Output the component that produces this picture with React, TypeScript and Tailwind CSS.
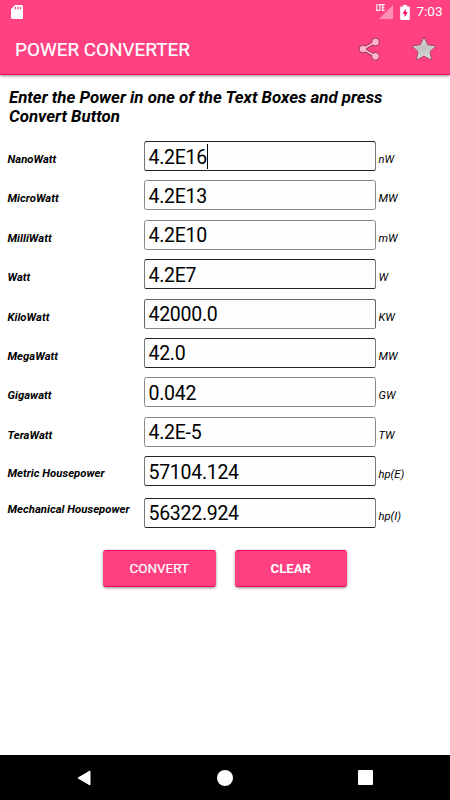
import React from "react";

type Row = { label: string; value: string; unit: string; row: string; labelPad: string; border: string; focused?: boolean };

const std = "h-[39.4px]";
const dark = "border-[#222] border-x-[#777]";
const light = "border-[#888]";

const rows: Row[] = [
  { label: "NanoWatt", value: "4.2E16", unit: "nW", row: std, labelPad: "pt-[12px]", border: dark, focused: true },
  { label: "MicroWatt", value: "4.2E13", unit: "MW", row: std, labelPad: "pt-[12px]", border: light },
  { label: "MilliWatt", value: "4.2E10", unit: "mW", row: std, labelPad: "pt-[12px]", border: light },
  { label: "Watt", value: "4.2E7", unit: "W", row: std, labelPad: "pt-[12px]", border: dark },
  { label: "KiloWatt", value: "42000.0", unit: "KW", row: std, labelPad: "pt-[12px]", border: "border-[#666] border-b-[#888]" },
  { label: "MegaWatt", value: "42.0", unit: "MW", row: std, labelPad: "pt-[12px]", border: dark },
  { label: "Gigawatt", value: "0.042", unit: "GW", row: std, labelPad: "pt-[12px]", border: light },
  { label: "TeraWatt", value: "4.2E-5", unit: "TW", row: std, labelPad: "pt-[12px]", border: light },
  { label: "Metric Housepower", value: "57104.124", unit: "hp(E)", row: "h-[41.8px]", labelPad: "pt-[11px]", border: dark },
  { label: "Mechanical Housepower", value: "56322.924", unit: "hp(I)", row: "h-[30px]", labelPad: "pt-[5px]", border: dark },
];

function StatusBar() {
  return (
    <div className="flex h-6 items-center pl-[11px] pr-[7.500px]">
      <svg width="12" height="14" viewBox="0 0 12 14" className="mt-[-1px]">
        <path d="M4 0h6.5Q12 0 12 1.5v11Q12 14 10.5 14h-9Q0 14 0 12.500V4Z" fill="#fff" />
        <path d="M4.500 1.800v2.500M7 1.800v2.500M9.500 1.800v2.500" stroke="#ff4081" strokeWidth="1.200" />
      </svg>
      <div className="relative ml-auto h-[14px] w-[18px]">
        <svg width="14" height="14" viewBox="0 0 14 14" className="ml-[4px]">
          <path d="M14 0v14H0Z" fill="#ff8fb5" />
        </svg>
        <span className="absolute -top-px left-[1px] origin-left scale-x-[0.62] text-[8.500px] leading-[8px] font-black">LTE</span>
      </div>
      <svg width="10" height="15" viewBox="0 0 9 14" className="ml-[7px]">
        <path d="M2.700 0h3.600v1.400H8q1 0 1 1V13q0 1-1 1H1q-1 0-1-1V2.400q0-1 1-1h1.700Z" fill="#fff" />
        <path d="M5.200 3.700 2.200 8.200h1.900v3.300l3-4.800H5.200Z" fill="#f80060" />
      </svg>
      <span className="ml-[6.500px] text-[13.500px] leading-none">7:03</span>
    </div>
  );
}

function AppBar() {
  return (
    <div className="flex h-[51px] items-center border-b border-[#f80066] pl-[15px] pr-[13px]">
      <h1 className="mt-px text-[18.900px] leading-6 font-normal [-webkit-text-stroke:0.2px_white]">POWER CONVERTER</h1>
      <svg width="24" height="24" viewBox="0 0 24 24" className="ml-auto">
        <g fill="none" stroke="#90304f" strokeWidth="3.400">
          <path d="M17.500 5 5 12 17.500 19.500" />
        </g>
        <g fill="#ffb3cc" stroke="#90304f" strokeWidth="0.900">
          <circle cx="17.500" cy="5" r="3.900" />
          <circle cx="5" cy="12" r="3.900" />
          <circle cx="17.500" cy="19.300" r="3.900" />
        </g>
        <path d="M17.500 5 5 12 17.500 19.300" fill="none" stroke="#ffb3cc" strokeWidth="1.900" />
      </svg>
      <svg width="26" height="26" viewBox="0 0 26 26" className="ml-[29px]">
        <defs>
          <linearGradient id="starFill" x1="0" y1="0" x2="0.300" y2="1">
            <stop offset="0" stopColor="#f2f2f2" />
            <stop offset="0.500" stopColor="#c0c0c0" />
            <stop offset="1" stopColor="#d6d6d6" />
          </linearGradient>
        </defs>
        <path d="m13 1.500 3.600 7.400 8.200 1.100-6 5.600 1.600 8.200L13 19.900l-7.400 3.900 1.600-8.200-6-5.600 8.200-1.100Z" fill="url(#starFill)" stroke="#8a4960" strokeWidth="0.900" strokeLinejoin="round" />
        <path d="m13 3.200 3 6.700 7 0.900-5.200 4.800 1.400 6.800-6.200-3.500-6.200 3.500 1.400-6.800L3 10.800l7-0.900Z" fill="none" stroke="#d8d8d8" strokeWidth="0.800" />
      </svg>
    </div>
  );
}

export default function App() {
  return (
    <div className="flex h-[800px] w-[450px] flex-col overflow-hidden bg-white font-['Roboto',sans-serif] text-black">
      <header className="bg-[#ff4081] text-white shadow-[0_1px_3px_rgba(0,0,0,0.45)]">
        <StatusBar />
        <AppBar />
      </header>
      <main className="flex-1">
        <p className="h-[66px] pt-[12.500px] pl-[9px] text-[16.850px] leading-[19.500px] font-bold italic">
          Enter the Power in one of the Text Boxes and press<br />Convert Button
        </p>
        {rows.map((r) => (
          <div key={r.label} className={`flex items-start pl-[7.500px] ${r.row}`}>
            <span className={`w-[136px] text-[11.300px] leading-[14px] font-bold tracking-[0.03px] italic ${r.labelPad}`}>{r.label}</span>
            <div className={`flex h-[30px] w-[232px] items-center rounded-[2.500px] border bg-[#fefefe] pl-1 text-[19.500px] leading-none tracking-[-0.280px] ${r.border}`}>
              <span className="pt-[2.500px]">{r.value}</span>
              {r.focused && <span className="h-[25px] w-px bg-black" />}
            </div>
            <span className="pt-[12px] pl-[3px] text-[11.200px] leading-[14px] italic">{r.unit}</span>
          </div>
        ))}
        <div className="mt-[22px] flex gap-[19px] pl-[103px] text-[13.200px] text-white">
          <button className="h-[37px] w-[112.500px] rounded-[3px] border border-t-[#f80066] border-x-[#ff4081] border-b-[#f80066] bg-[#ff4081] pt-px text-[13.400px] font-normal shadow-[0_1px_3px_rgba(0,0,0,0.45)] [-webkit-text-stroke:0.2px_white]">CONVERT</button>
          <button className="h-[37px] w-[112.500px] rounded-[3px] border border-t-[#f80066] border-x-[#ff4081] border-b-[#f80066] bg-[#ff4081] pt-px font-bold shadow-[0_1px_3px_rgba(0,0,0,0.45)]">CLEAR</button>
        </div>
      </main>
      <nav className="flex h-[45px] items-center bg-black pr-[77.500px] pl-[77px]">
        <svg width="14" height="16" viewBox="0 0 14 16">
          <path d="M13 1v14L1 8Z" fill="#fff" stroke="#fff" strokeLinejoin="round" />
        </svg>
        <div className="ml-[126px] size-4 rounded-full bg-white" />
        <div className="ml-auto size-[14.500px] rounded-[1px] bg-white" />
      </nav>
    </div>
  );
}
